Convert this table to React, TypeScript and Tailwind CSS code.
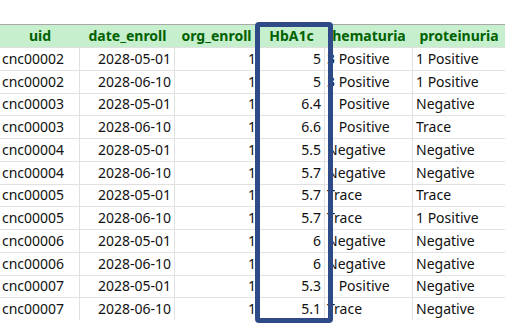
import React from "react";

const rows: [string, string, string, string, string, string][] = [
  ["cnc00002", "2028-05-01", "1", "5", "3 Positive", "1 Positive"],
  ["cnc00002", "2028-06-10", "1", "5", "3 Positive", "1 Positive"],
  ["cnc00003", "2028-05-01", "1", "6.4", "1 Positive", "Negative"],
  ["cnc00003", "2028-06-10", "1", "6.6", "1 Positive", "Trace"],
  ["cnc00004", "2028-05-01", "1", "5.5", "Negative", "Negative"],
  ["cnc00004", "2028-06-10", "1", "5.7", "Negative", "Negative"],
  ["cnc00005", "2028-05-01", "1", "5.7", "Trace", "Trace"],
  ["cnc00005", "2028-06-10", "1", "5.7", "Trace", "1 Positive"],
  ["cnc00006", "2028-05-01", "1", "6", "Negative", "Negative"],
  ["cnc00006", "2028-06-10", "1", "6", "Negative", "Negative"],
  ["cnc00007", "2028-05-01", "1", "5.3", "1 Positive", "Negative"],
  ["cnc00007", "2028-06-10", "1", "5.1", "Trace", "Negative"],
];

export default function App() {
  return (
    <div
      className="relative w-[505px] h-[329px] overflow-hidden bg-white text-[14px] text-[#111]"
      style={{ fontFamily: '"Noto Sans", "Open Sans", sans-serif' }}
    >
      <div className="h-[24px]" />
      <div className="flex h-[23px] border-t border-[#a8a8a8] bg-[#c6efce] font-bold text-[#006100] leading-none items-center whitespace-nowrap">
        <div className="w-[80px] text-center">uid</div>
        <div className="w-[95px] text-center">date_enroll</div>
        <div className="w-[83px] text-center">org_enroll</div>
        <div className="w-[67px] text-center">HbA1c</div>
        <div className="w-[88px] text-center">hematuria</div>
        <div className="w-[92px] text-center">proteinuria</div>
      </div>
      {rows.map((r, i) => (
        <div
          key={i}
          className="flex h-[22.75px] border-t border-[#e1e1e1] leading-none whitespace-nowrap"
        >
          <div className="w-[80px] flex items-center pl-[2px] border-r border-[#e1e1e1] overflow-hidden">{r[0]}</div>
          <div className="w-[95px] flex items-center justify-end pr-[3px] border-r border-[#e1e1e1]">{r[1]}</div>
          <div className="w-[83px] flex items-center justify-end pr-[1px] border-r border-[#e1e1e1]">{r[2]}</div>
          <div className="w-[67px] flex items-center justify-end pr-[3px] border-r border-[#e1e1e1]">{r[3]}</div>
          <div className="w-[88px] flex items-center pl-[2px] border-r border-[#e1e1e1] overflow-hidden">{r[4]}</div>
          <div className="w-[92px] flex items-center pl-[3px] overflow-hidden">{r[5]}</div>
        </div>
      ))}
      <div className="absolute left-[255px] top-[22px] w-[78px] h-[301px] border-[5px] border-[#2f4b87] rounded-[4px]" />
    </div>
  );
}
